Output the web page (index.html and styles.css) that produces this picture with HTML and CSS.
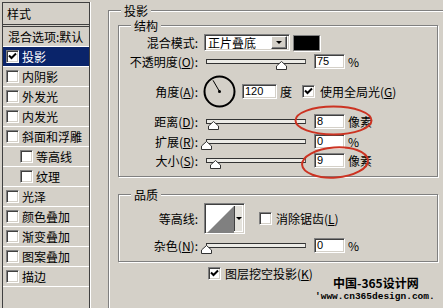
FILE: index.html
```html
<!DOCTYPE html>
<html lang="zh-CN">

<head>
    <meta charset="UTF-8">
    <meta name="viewport" content="width=device-width, initial-scale=1.0">
    <title>图层样式</title>
    <link rel="stylesheet" href="styles.css">
</head>

<body>
    <div class="dialog">
        <!-- 左侧样式列表 -->
        <div class="styles">
            <div class="styles-head">样式</div>
            <ul class="style-list">
                <li class="plain">混合选项:默认</li>
                <li class="on"><span class="check"><svg width="9" height="9" viewBox="0 0 9 9"><path d="M1 3.5 L3.5 6 L8 1.5" fill="none" stroke="#000" stroke-width="2"/></svg></span>投影</li>
                <li><span class="check"></span>内阴影</li>
                <li><span class="check"></span>外发光</li>
                <li><span class="check"></span>内发光</li>
                <li><span class="check"></span>斜面和浮雕</li>
                <li class="sub"><span class="check"></span>等高线</li>
                <li class="sub"><span class="check"></span>纹理</li>
                <li><span class="check"></span>光泽</li>
                <li><span class="check"></span>颜色叠加</li>
                <li><span class="check"></span>渐变叠加</li>
                <li><span class="check"></span>图案叠加</li>
                <li><span class="check"></span>描边</li>
            </ul>
        </div>

        <!-- 右侧设置 -->
        <div class="settings">
            <fieldset class="group outer">
                <legend>投影</legend>
                <div class="outer-body">
                    <fieldset class="group box">
                        <legend>结构</legend>
                        <div class="box-body struct">
                            <div class="row h19">
                                <span class="lbl">混合模式:</span>
                                <div class="select">
                                    <span class="select-text">正片叠底</span>
                                    <span class="drop"><i class="arrow"></i></span>
                                </div>
                                <div class="swatch"></div>
                            </div>
                            <div class="row h18">
                                <span class="lbl">不透明度(<u>O</u>):</span>
                                <div class="slider"><svg class="thumb" style="left: 69px" width="11" height="9" viewBox="0 0 11 9"><path d="M5.5 0.5 L10.5 5 L10.5 8.5 L0.5 8.5 L0.5 5 Z" fill="#fff" stroke="#333"/></svg></div>
                                <span class="field">75</span>
                                <span class="unit">%</span>
                            </div>
                            <div class="row h42">
                                <span class="lbl">角度(<u>A</u>):</span>
                                <svg class="dial" width="33" height="33" viewBox="0 0 33 33">
                                    <circle cx="16.5" cy="16.5" r="15" fill="none" stroke="#000" stroke-width="2"/>
                                    <line x1="16.5" y1="16.5" x2="10" y2="5.3" stroke="#000" stroke-width="1"/>
                                    <circle cx="16.5" cy="16.5" r="1.5" fill="#000"/>
                                </svg>
                                <span class="field wide">120</span>
                                <span class="unit">度</span>
                                <span class="check gap-check"><svg width="9" height="9" viewBox="0 0 9 9"><path d="M1 3.5 L3.5 6 L8 1.5" fill="none" stroke="#000" stroke-width="2"/></svg></span>
                                <span class="check-text">使用全局光(<u>G</u>)</span>
                            </div>
                            <div class="row h19">
                                <span class="lbl">距离(<u>D</u>):</span>
                                <div class="slider"><svg class="thumb" style="left: 1px" width="11" height="9" viewBox="0 0 11 9"><path d="M5.5 0.5 L10.5 5 L10.5 8.5 L0.5 8.5 L0.5 5 Z" fill="#fff" stroke="#333"/></svg></div>
                                <span class="field">8</span>
                                <span class="unit">像素</span>
                            </div>
                            <div class="row h20">
                                <span class="lbl">扩展(<u>R</u>):</span>
                                <div class="slider"><svg class="thumb" style="left: -6px" width="11" height="9" viewBox="0 0 11 9"><path d="M5.5 0.5 L10.5 5 L10.5 8.5 L0.5 8.5 L0.5 5 Z" fill="#fff" stroke="#333"/></svg></div>
                                <span class="field">0</span>
                                <span class="unit">%</span>
                            </div>
                            <div class="row h19">
                                <span class="lbl">大小(<u>S</u>):</span>
                                <div class="slider"><svg class="thumb" style="left: 3px" width="11" height="9" viewBox="0 0 11 9"><path d="M5.5 0.5 L10.5 5 L10.5 8.5 L0.5 8.5 L0.5 5 Z" fill="#fff" stroke="#333"/></svg></div>
                                <span class="field">9</span>
                                <span class="unit">像素</span>
                            </div>
                        </div>
                    </fieldset>

                    <fieldset class="group box quality">
                        <legend>品质</legend>
                        <div class="box-body qual">
                            <div class="row h32">
                                <span class="lbl">等高线:</span>
                                <div class="contour">
                                    <svg class="curve" width="27" height="27" viewBox="0 0 27 27"><path d="M0 27 L27 0 L27 27 Z" fill="#808080"/></svg>
                                    <span class="contour-drop"><i class="arrow"></i></span>
                                </div>
                                <span class="check aa-check"></span>
                                <span class="check-text">消除锯齿(<u>L</u>)</span>
                            </div>
                            <div class="row h22">
                                <span class="lbl">杂色(<u>N</u>):</span>
                                <div class="slider"><svg class="thumb" style="left: -6px" width="11" height="9" viewBox="0 0 11 9"><path d="M5.5 0.5 L10.5 5 L10.5 8.5 L0.5 8.5 L0.5 5 Z" fill="#fff" stroke="#333"/></svg></div>
                                <span class="field">0</span>
                                <span class="unit">%</span>
                            </div>
                        </div>
                    </fieldset>

                    <div class="row knock">
                        <span class="check"><svg width="9" height="9" viewBox="0 0 9 9"><path d="M1 3.5 L3.5 6 L8 1.5" fill="none" stroke="#000" stroke-width="2"/></svg></span>
                        <span class="check-text">图层挖空投影(<u>K</u>)</span>
                    </div>
                </div>
            </fieldset>
        </div>

        <!-- 红圈标注 -->
        <svg class="marks" width="443" height="308" viewBox="0 0 443 308">
            <ellipse cx="333.5" cy="120.5" rx="38" ry="14" fill="none" stroke="#cc3322" stroke-width="2"/>
            <ellipse cx="335" cy="162.5" rx="33" ry="15" fill="none" stroke="#cc3322" stroke-width="2" transform="rotate(-4 335 162.5)"/>
        </svg>

        <div class="watermark">
            <div class="wm-name">中国-365设计网</div>
            <div class="wm-url">'www.cn365design.com.</div>
        </div>
    </div>
</body>

</html>
```

FILE: styles.css
```css
* {
    box-sizing: border-box;
}

body {
    margin: 0;
    width: 443px;
    height: 308px;
    overflow: hidden;
    background-color: #d4d0c8;
    color: #000;
    font: 12px/15px "Noto Sans CJK SC", sans-serif;
}

ul {
    margin: 0;
    padding: 0;
}

li {
    list-style: none;
}

u {
    text-decoration: underline;
    text-underline-offset: 1px;
}

.dialog {
    display: flex;
    position: relative;
    height: 308px;
    overflow: hidden;
}

/* 左侧列表 */
.styles {
    flex: none;
    width: 88px;
    height: 306px;
    margin: 2px 0 0 2px;
    border: 1px solid #404040;
    border-bottom: none;
    box-shadow: 1px 0 #fff;
}

.styles-head {
    height: 24px;
    padding: 3px 0 0 4px;
    border-bottom: 3px double #404040;
}

.style-list li {
    display: flex;
    align-items: center;
    height: 20px;
    padding-left: 3px;
    border-bottom: 1px solid #fff;
    white-space: nowrap;
}

.style-list li.plain {
    padding-left: 5px;
}

.style-list li.sub {
    padding-left: 17px;
}

.style-list li.on {
    background-color: #0a246a;
    color: #fff;
}

.style-list li .check {
    margin-right: 3px;
}

.check {
    flex: none;
    display: flex;
    align-items: center;
    justify-content: center;
    width: 13px;
    height: 13px;
    background-color: #fff;
    border: 1px solid;
    border-color: #808080 #fff #fff #808080;
    box-shadow: inset 1px 1px #404040, inset -1px -1px #d4d0c8;
}

.check svg {
    display: block;
}

/* 右侧 */
.settings {
    flex: none;
    padding-left: 18px;
}

.group {
    margin: 0;
    padding: 0;
    border: 1px solid #808080;
    box-shadow: inset 1px 1px #fff, 1px 1px #fff;
}

.group legend {
    margin-left: 12px;
    padding: 0 3px;
    line-height: 15px;
    background-color: #d4d0c8;
}

.outer {
    width: 345px;
    height: 305px;
    margin-top: 3px;
    border-bottom: none;
}

.outer-body {
    padding-left: 9px;
}

.box {
    width: 320px;
}

.quality {
    margin-top: 10px;
}

.struct {
    padding-bottom: 6px;
}

.qual {
    padding-bottom: 5px;
}

.row {
    display: flex;
    align-items: center;
    white-space: nowrap;
}

.h18 { height: 18px; }
.h19 { height: 19px; }
.h20 { height: 20px; }
.h22 { height: 22px; }
.h32 { height: 32px; }
.h42 { height: 42px; }

.lbl {
    flex: none;
    width: 79px;
    text-align: right;
}

/* 下拉框 */
.select {
    display: flex;
    align-items: center;
    width: 86px;
    height: 17px;
    margin-left: 6px;
    padding: 2px;
    background-color: #fff;
    border: 1px solid;
    border-color: #808080 #fff #fff #808080;
    box-shadow: inset 1px 1px #404040, inset -1px -1px #d4d0c8;
}

.select-text {
    flex: 1;
    padding-left: 1px;
    line-height: 13px;
}

.drop {
    display: flex;
    align-items: center;
    justify-content: center;
    width: 16px;
    height: 13px;
    background-color: #d4d0c8;
    border: 1px solid;
    border-color: #fff #404040 #404040 #fff;
    box-shadow: inset -1px -1px #808080;
}

.arrow {
    width: 0;
    height: 0;
    border-left: 3px solid transparent;
    border-right: 3px solid transparent;
    border-top: 3px solid #000;
}

.swatch {
    width: 27px;
    height: 16px;
    margin-left: 3px;
    background-color: #000;
    border: 1px solid #808080;
    box-shadow: 1px 1px #fff;
}

/* 滑块 */
.slider {
    position: relative;
    flex: none;
    width: 100px;
    height: 5px;
    margin-left: 8px;
    background-color: #ecebe6;
    border: 1px solid #333;
    border-right-color: #555;
}

.thumb {
    position: absolute;
    top: 1px;
    display: block;
}

/* 数值框 */
.field {
    flex: none;
    width: 31px;
    height: 15px;
    margin-left: 8px;
    padding-left: 2px;
    background-color: #fff;
    border: 1px solid;
    border-color: #808080 #fff #fff #808080;
    box-shadow: inset 1px 1px #404040, inset -1px -1px #d4d0c8;
    font: 11px/13px "Liberation Sans", Arial, sans-serif;
}

.field.wide {
    width: 35px;
    margin-left: 6px;
}

.unit {
    margin-left: 3px;
}

.dial {
    flex: none;
    display: block;
    margin-left: 5px;
}

.gap-check {
    margin-left: 10px;
}

.check-text {
    margin-left: 5px;
}

/* 等高线 */
.contour {
    display: flex;
    width: 41px;
    height: 31px;
    margin-left: 6px;
    padding: 2px;
    background-color: #fff;
    border: 1px solid;
    border-color: #808080 #fff #fff #808080;
    box-shadow: inset 1px 1px #404040, inset -1px -1px #d4d0c8;
}

.curve {
    display: block;
}

.contour-drop {
    display: flex;
    align-items: center;
    justify-content: center;
    flex: 1;
    background-color: #e4e2dc;
    border-left: 1px solid #404040;
}

.aa-check {
    margin-left: 14px;
}

.aa-check + .check-text {
    margin-left: 4px;
}

.knock {
    height: 15px;
    margin-top: 4px;
    padding-left: 90px;
}

.knock .check-text {
    margin-left: 4px;
}

/* 标注 */
.marks {
    position: absolute;
    left: 0;
    top: 0;
    pointer-events: none;
}

.watermark {
    position: absolute;
    left: 315px;
    top: 274px;
}

.wm-name {
    margin-left: 18px;
    font: bold 12px/17px "Noto Sans CJK SC", sans-serif;
}

.wm-url {
    font: bold 9.5px/11px "Liberation Mono", monospace;
}
```
